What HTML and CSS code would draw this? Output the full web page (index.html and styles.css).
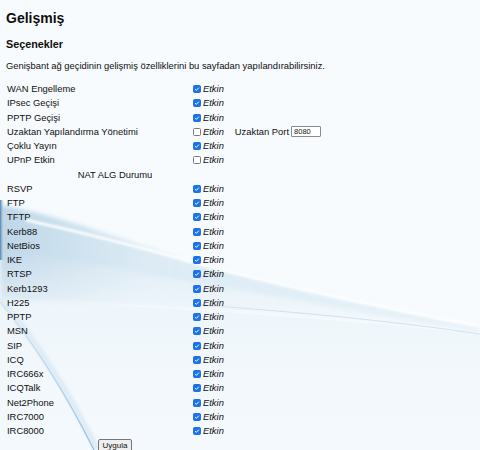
FILE: index.html
```html
<!DOCTYPE html>
<html lang="tr">
<head>
<meta charset="utf-8">
<title>Gelişmiş</title>
<link rel="stylesheet" href="styles.css">
</head>
<body>
<svg class="backdrop" viewBox="0 0 480 450" preserveAspectRatio="none" aria-hidden="true">
  <defs>
    <filter id="soft" x="-10%" y="-20%" width="120%" height="140%">
      <feGaussianBlur stdDeviation="2"/>
    </filter>
    <filter id="softer" x="-10%" y="-20%" width="120%" height="140%">
      <feGaussianBlur stdDeviation="1"/>
    </filter>
    <linearGradient id="band" x1="0" y1="0" x2="1" y2="0">
      <stop offset="0" stop-color="#b4d0e5" stop-opacity="0.85"/>
      <stop offset="0.3" stop-color="#d3e5f1" stop-opacity="0.75"/>
      <stop offset="1" stop-color="#e0edf6" stop-opacity="0.65"/>
    </linearGradient>
    <linearGradient id="fade" x1="0" y1="0" x2="0" y2="1">
      <stop offset="0" stop-color="#ffffff" stop-opacity="0"/>
      <stop offset="1" stop-color="#f7fbfe" stop-opacity="0.85"/>
    </linearGradient>
    <linearGradient id="low" x1="0" y1="0" x2="0" y2="1">
      <stop offset="0" stop-color="#edf5fa" stop-opacity="0.9"/>
      <stop offset="1" stop-color="#f3f8fc" stop-opacity="0.6"/>
    </linearGradient>
    <linearGradient id="edge" x1="0" y1="0" x2="1" y2="0">
      <stop offset="0" stop-color="#4a7eab"/>
      <stop offset="1" stop-color="#a8c8e0" stop-opacity="0"/>
    </linearGradient>
    <linearGradient id="streak" x1="0" y1="0" x2="0" y2="1">
      <stop offset="0" stop-color="#a9cbe6" stop-opacity="0.3"/>
      <stop offset="1" stop-color="#79b0df" stop-opacity="0.8"/>
    </linearGradient>
  </defs>
  <rect width="480" height="450" fill="#f7fbfe"/>
  <path d="M0 300 C120 305 300 315 480 334 L480 450 L0 450 Z" fill="url(#low)"/>
  <g filter="url(#soft)">
    <path d="M0 205 C60 215 140 245 200 265 C300 290 400 312 480 327 L480 334 C330 316 200 306 0 300 Z" fill="url(#band)"/>
    <path d="M0 250 C100 262 250 295 480 332 L480 334 C330 316 200 306 0 300 Z" fill="url(#fade)"/>
  </g>
  <path d="M26 220 C80 232 140 247 200 264 C300 290 400 311 480 326" fill="none" stroke="#ffffff" stroke-width="2.4" filter="url(#softer)"/>
  <path d="M200 305 C300 312 400 322 480 334" fill="none" stroke="#d0e3f0" stroke-width="1"/>
  <path d="M0 298 C35 340 70 395 97 450" fill="none" stroke="#e0edf6" stroke-width="7" filter="url(#softer)"/>
  <path d="M0 302 C35 344 68 398 94 450" fill="none" stroke="url(#streak)" stroke-width="1.2"/>
  <rect x="0" y="200" width="4" height="60" fill="url(#edge)"/>
</svg>

<main class="page">
  <h1 class="title">Gelişmiş</h1>
  <h2 class="subtitle">Seçenekler</h2>
  <p class="intro">Genişbant ağ geçidinin gelişmiş özelliklerini bu sayfadan yapılandırabilirsiniz.</p>

  <div class="rows">
    <div class="row"><span class="label">WAN Engelleme</span><label class="opt"><input type="checkbox" checked><i>Etkin</i></label></div>
    <div class="row"><span class="label">IPsec Geçişi</span><label class="opt"><input type="checkbox" checked><i>Etkin</i></label></div>
    <div class="row"><span class="label">PPTP Geçişi</span><label class="opt"><input type="checkbox" checked><i>Etkin</i></label></div>
    <div class="row"><span class="label">Uzaktan Yapılandırma Yönetimi</span><label class="opt"><input type="checkbox"><i>Etkin</i></label><span class="port">Uzaktan Port <input class="port-input" type="text" value="8080"></span></div>
    <div class="row"><span class="label">Çoklu Yayın</span><label class="opt"><input type="checkbox" checked><i>Etkin</i></label></div>
    <div class="row"><span class="label">UPnP Etkin</span><label class="opt"><input type="checkbox"><i>Etkin</i></label></div>
    <div class="row section"><span class="center">NAT ALG Durumu</span></div>
    <div class="row"><span class="label">RSVP</span><label class="opt"><input type="checkbox" checked><i>Etkin</i></label></div>
    <div class="row"><span class="label">FTP</span><label class="opt"><input type="checkbox" checked><i>Etkin</i></label></div>
    <div class="row"><span class="label">TFTP</span><label class="opt"><input type="checkbox" checked><i>Etkin</i></label></div>
    <div class="row"><span class="label">Kerb88</span><label class="opt"><input type="checkbox" checked><i>Etkin</i></label></div>
    <div class="row"><span class="label">NetBios</span><label class="opt"><input type="checkbox" checked><i>Etkin</i></label></div>
    <div class="row"><span class="label">IKE</span><label class="opt"><input type="checkbox" checked><i>Etkin</i></label></div>
    <div class="row"><span class="label">RTSP</span><label class="opt"><input type="checkbox" checked><i>Etkin</i></label></div>
    <div class="row"><span class="label">Kerb1293</span><label class="opt"><input type="checkbox" checked><i>Etkin</i></label></div>
    <div class="row"><span class="label">H225</span><label class="opt"><input type="checkbox" checked><i>Etkin</i></label></div>
    <div class="row"><span class="label">PPTP</span><label class="opt"><input type="checkbox" checked><i>Etkin</i></label></div>
    <div class="row"><span class="label">MSN</span><label class="opt"><input type="checkbox" checked><i>Etkin</i></label></div>
    <div class="row"><span class="label">SIP</span><label class="opt"><input type="checkbox" checked><i>Etkin</i></label></div>
    <div class="row"><span class="label">ICQ</span><label class="opt"><input type="checkbox" checked><i>Etkin</i></label></div>
    <div class="row"><span class="label">IRC666x</span><label class="opt"><input type="checkbox" checked><i>Etkin</i></label></div>
    <div class="row"><span class="label">ICQTalk</span><label class="opt"><input type="checkbox" checked><i>Etkin</i></label></div>
    <div class="row"><span class="label">Net2Phone</span><label class="opt"><input type="checkbox" checked><i>Etkin</i></label></div>
    <div class="row"><span class="label">IRC7000</span><label class="opt"><input type="checkbox" checked><i>Etkin</i></label></div>
    <div class="row"><span class="label">IRC8000</span><label class="opt"><input type="checkbox" checked><i>Etkin</i></label></div>
    <div class="actions"><button class="apply" type="button">Uygula</button></div>
  </div>
</main>
</body>
</html>
```

FILE: styles.css
```css
html, body {
  margin: 0;
  padding: 0;
  height: 100%;
}

body {
  font-family: "Liberation Sans", Arial, sans-serif;
  color: #0f0f0f;
  background: #f7fbfe;
  position: relative;
  overflow: hidden;
}

.backdrop {
  position: absolute;
  left: 0;
  top: 0;
  width: 480px;
  height: 450px;
  z-index: 0;
}

.page {
  position: relative;
  z-index: 1;
  padding: 0 6px;
}

.title {
  font-size: 14px;
  line-height: 16px;
  font-weight: bold;
  margin: 0;
  padding-top: 10px;
}

.subtitle {
  font-size: 10.8px;
  line-height: 14px;
  font-weight: bold;
  margin: 11px 0 0;
}

.intro {
  font-size: 9.4px;
  line-height: 14px;
  margin: 8px 0 0;
}

.rows {
  margin-top: 9px;
  padding-left: 1px;
}

.row {
  display: flex;
  align-items: center;
  height: 14.25px;
  font-size: 9.4px;
  line-height: 12px;
  white-space: nowrap;
}

.label {
  width: 186px;
  flex: none;
}

.opt {
  display: flex;
  align-items: center;
}

.opt input {
  appearance: none;
  -webkit-appearance: none;
  box-sizing: border-box;
  width: 8px;
  height: 8px;
  margin: 0 2px 0 0;
  border: 1px solid #7a7a7a;
  border-radius: 1.5px;
  background: #fff;
}

.opt input:checked {
  border-color: #1a73e8;
  background: #1a73e8 url("data:image/svg+xml,%3Csvg xmlns='http://www.w3.org/2000/svg' viewBox='0 0 8 8'%3E%3Cpath d='M1.5 4.2 L3.2 5.8 L6.5 2.2' fill='none' stroke='white' stroke-width='1.3'/%3E%3C/svg%3E") center / 100% 100% no-repeat;
}

.opt i {
  font-style: italic;
}

.port {
  margin-left: 11px;
  display: flex;
  align-items: center;
}

.port-input {
  width: 30px;
  height: 11px;
  box-sizing: border-box;
  margin: 0 0 0 2px;
  padding: 0 2px;
  border: 1px solid #8a8a8a;
  border-radius: 1px;
  background: #fff;
  font-family: "Liberation Sans", Arial, sans-serif;
  font-size: 7.5px;
  color: #111;
}

.section {
  width: 216px;
  justify-content: center;
}

.actions {
  width: 216px;
  display: flex;
  justify-content: center;
  padding-top: 1px;
}

.apply {
  font-family: "Liberation Sans", Arial, sans-serif;
  font-size: 8px;
  line-height: 10px;
  height: 13px;
  width: 34px;
  padding: 0;
  margin: 0;
  border: 1px solid #767676;
  border-radius: 2px;
  background: #efefef;
  color: #111;
}
```
